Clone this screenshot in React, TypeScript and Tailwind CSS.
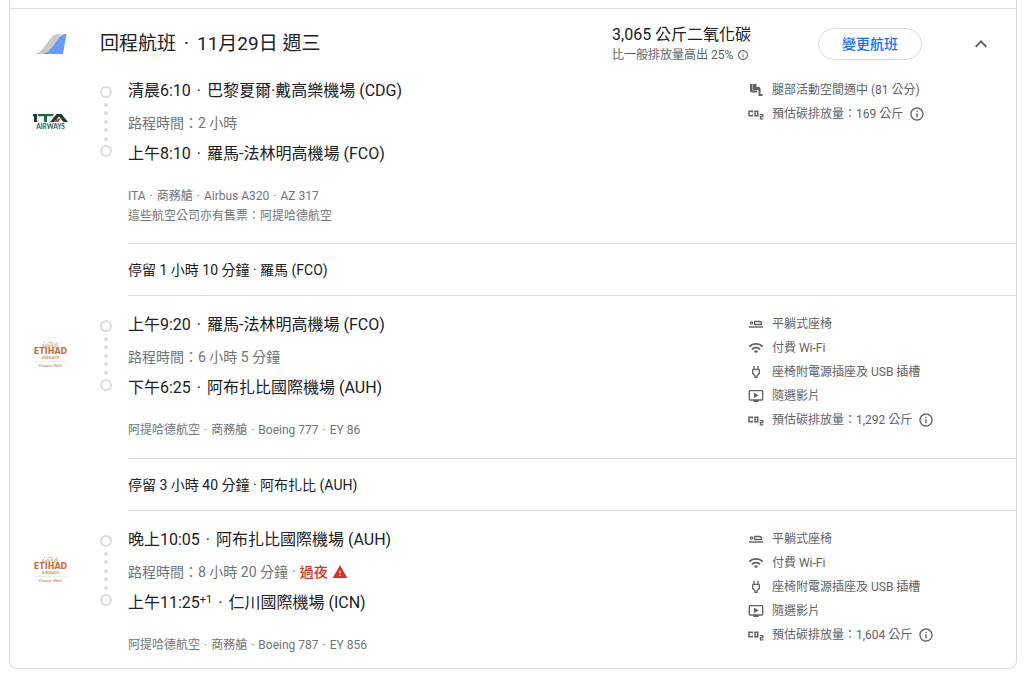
import { Fragment, type ReactNode } from 'react'
import {
  MdExpandLess,
  MdInfoOutline,
  MdOndemandVideo,
  MdOutlinePower,
  MdWarning,
  MdWifi,
} from 'react-icons/md'

type AmenityKind = 'legroom' | 'flat' | 'wifi' | 'power' | 'video' | 'co2'

interface Amenity {
  kind: AmenityKind
  label: string
}

interface Leg {
  airline: 'ita' | 'etihad'
  departTime: string
  departAirport: string
  duration: string
  overnight?: boolean
  arriveTime: string
  dayOffset?: string
  arriveAirport: string
  details: string[]
  note?: string
  amenities: Amenity[]
  layover?: string
}

const etihadAmenities = (co2: string): Amenity[] => [
  { kind: 'flat', label: '平躺式座椅' },
  { kind: 'wifi', label: '付費 Wi-Fi' },
  { kind: 'power', label: '座椅附電源插座及 USB 插槽' },
  { kind: 'video', label: '隨選影片' },
  { kind: 'co2', label: `預估碳排放量：${co2} 公斤` },
]

const legs: Leg[] = [
  {
    airline: 'ita',
    departTime: '清晨6:10',
    departAirport: '巴黎夏爾·戴高樂機場 (CDG)',
    duration: '2 小時',
    arriveTime: '上午8:10',
    arriveAirport: '羅馬-法林明高機場 (FCO)',
    details: ['ITA', '商務艙', 'Airbus A320', 'AZ 317'],
    note: '這些航空公司亦有售票：阿提哈德航空',
    amenities: [
      { kind: 'legroom', label: '腿部活動空間適中 (81 公分)' },
      { kind: 'co2', label: '預估碳排放量：169 公斤' },
    ],
    layover: '停留 1 小時 10 分鐘 · 羅馬 (FCO)',
  },
  {
    airline: 'etihad',
    departTime: '上午9:20',
    departAirport: '羅馬-法林明高機場 (FCO)',
    duration: '6 小時 5 分鐘',
    arriveTime: '下午6:25',
    arriveAirport: '阿布扎比國際機場 (AUH)',
    details: ['阿提哈德航空', '商務艙', 'Boeing 777', 'EY 86'],
    amenities: etihadAmenities('1,292'),
    layover: '停留 3 小時 40 分鐘 · 阿布扎比 (AUH)',
  },
  {
    airline: 'etihad',
    departTime: '晚上10:05',
    departAirport: '阿布扎比國際機場 (AUH)',
    duration: '8 小時 20 分鐘',
    overnight: true,
    arriveTime: '上午11:25',
    dayOffset: '+1',
    arriveAirport: '仁川國際機場 (ICN)',
    details: ['阿提哈德航空', '商務艙', 'Boeing 787', 'EY 856'],
    amenities: etihadAmenities('1,604'),
  },
]

function TailLogo() {
  return (
    <svg viewBox="0 0 34 22" className="h-[22px] w-[34px]" aria-hidden="true">
      <path d="M1 21C5 20.500 7 19 9.500 16L18 5C20.500 1.800 22 1 25 1H28L22 21Z" fill="#c8cacc" />
      <path d="M10 21C14 20 16 18 18.500 15L26 5C28.500 1.800 30 1 33.500 1L30 21Z" fill="#669df6" />
    </svg>
  )
}

function ItaLogo() {
  return (
    <svg viewBox="0 0 35 16" className="h-4 w-[35px]" aria-label="ITA Airways">
      <path d="M0 0H4V8H1V2.200H0Z" fill="#1f3b34" />
      <path d="M5 0H21L19.500 2.200H14V8H11V2.200H5Z" fill="#23674c" />
      <path d="M17 8L23.500 0H28.500L35 8H30.500L26 2.400L21 8Z" fill="#1f3b34" />
      <path d="M21 8L24 4.500H27.500L25.500 8Z" fill="#e0442f" />
      <text
        x="17.500"
        y="15"
        textAnchor="middle"
        fontSize="6.500"
        fontWeight="700"
        fontFamily="Lato, sans-serif"
        fill="#2d5a4b"
      >
        AIRWAYS
      </text>
    </svg>
  )
}

function EtihadLogo() {
  return (
    <svg viewBox="0 0 35 28" className="h-7 w-[35px]" aria-label="Etihad Airways">
      <path
        d="M10 2V5H13V2.500M15 1.500V5H17V2.500M19 0.500V5H22V1.500M24 0.500V4.500M11 0.500H12M16 0.500H18"
        fill="none"
        stroke="#cf9a72"
        strokeWidth="0.900"
      />
      <g textAnchor="middle">
        <text
          x="17.500"
          y="12"
          fontSize="8"
          fontFamily="DejaVu Sans, sans-serif"
          fontWeight="700"
          fill="#c9703f"
        >
          ETIHAD
        </text>
        <text x="17.500" y="17" fontSize="4" fontFamily="Lato, sans-serif" fontWeight="700" fill="#d0905f">
          AIRWAYS
        </text>
        <text x="17.500" y="25" fontSize="4.500" fontFamily="Lato, sans-serif" fontStyle="italic" fill="#c06a38">
          Choose Well.
        </text>
      </g>
      <path d="M1 19.500H34" stroke="#e3ddd8" strokeWidth="0.600" />
    </svg>
  )
}

const amenityIcons: Record<AmenityKind, ReactNode> = {
  legroom: (
    <svg viewBox="0 0 16 16" className="size-4" fill="#5f6368" aria-hidden="true">
      <path d="M2 2H4.500V8.500H9V10.500H4Q2 10.500 2 8.500Z" />
      <path d="M5 2H8.500V5H11Q12.500 5 12.500 6.500V12H14.500V14H10.500V8H5Z" />
    </svg>
  ),
  flat: (
    <svg viewBox="0 0 16 16" className="size-4" fill="none" stroke="#5f6368" aria-hidden="true">
      <circle cx="3.500" cy="7" r="1.200" strokeWidth="1.200" />
      <path d="M6.500 8.500V5.500H11.500Q13.500 5.500 13.500 7.500V8.500Z" strokeWidth="1.300" />
      <path d="M1 11H15" strokeWidth="1.400" />
    </svg>
  ),
  wifi: <MdWifi className="size-4" />,
  power: <MdOutlinePower className="size-4" />,
  video: <MdOndemandVideo className="size-4" />,
  co2: (
    <svg viewBox="0 0 16 16" className="size-4" fill="none" stroke="#5f6368" aria-hidden="true">
      <path d="M4.300 6.500V5.200H1V9.800H4.300V8.500" strokeWidth="1.500" />
      <path d="M7 5.200H9.800V9.800H7Z" strokeWidth="1.500" />
      <path d="M11.800 8.600H14.800V10.700H12.400V12.900H15.400" strokeWidth="1.200" />
    </svg>
  ),
}

function Timeline() {
  return (
    <div className="flex h-[71px] w-3 flex-col items-center justify-between" aria-hidden="true">
      <span className="size-3 rounded-full border-2 border-[#dadce0]" />
      {[0, 1, 2, 3, 4].map((dot) => (
        <span key={dot} className="size-1 rounded-full bg-[#dadce0]" />
      ))}
      <span className="size-3 rounded-full border-2 border-[#dadce0]" />
    </div>
  )
}

function LegSection({ leg, first, last }: { leg: Leg; first: boolean; last: boolean }) {
  return (
    <section className={`flex items-start ${first ? '' : 'pt-4'} ${last ? 'pb-3' : ''}`}>
      <div className="flex h-[87px] w-[118px] shrink-0 items-center justify-between pr-4 pl-[23px]">
        {leg.airline === 'ita' ? <ItaLogo /> : <EtihadLogo />}
        <Timeline />
      </div>

      <div className={`min-w-0 flex-1 pt-px ${first ? 'pb-[17px]' : last ? 'pb-px' : 'pb-[18px]'}`}>
        <p className="text-base leading-6 text-[#202124]">
          {leg.departTime}
          <span className="mx-1.5">·</span>
          {leg.departAirport}
        </p>
        <p className="flex h-[39px] items-center text-sm text-[#70757a]">
          路程時間：{leg.duration}
          {leg.overnight && (
            <>
              <span className="mx-1">·</span>
              <span className="font-medium text-[#d93025]">過夜</span>
              <MdWarning className="ml-1 size-4 text-[#d93025]" />
            </>
          )}
        </p>
        <p className="text-base leading-6 text-[#202124]">
          {leg.arriveTime}
          {leg.dayOffset && <sup className="text-[11px] leading-none">{leg.dayOffset}</sup>}
          <span className="mx-1.5">·</span>
          {leg.arriveAirport}
        </p>
        <div className="mt-5 text-xs leading-5 text-[#70757a]">
          <p>
            {leg.details.map((part, i) => (
              <Fragment key={part}>
                {i > 0 && <span className="mx-1">·</span>}
                {part}
              </Fragment>
            ))}
          </p>
          {leg.note && <p>{leg.note}</p>}
        </div>
      </div>

      <ul className="w-[268px] shrink-0 text-xs text-[#5f6368]">
        {leg.amenities.map((item) => (
          <li key={item.label} className="flex h-6 items-center gap-2">
            {amenityIcons[item.kind]}
            <span className="flex items-center gap-1.5">
              {item.label}
              {item.kind === 'co2' && (
                <button type="button" aria-label="碳排放量詳情">
                  <MdInfoOutline className="size-4" />
                </button>
              )}
            </span>
          </li>
        ))}
      </ul>
    </section>
  )
}

export default function App() {
  return (
    <main className="bg-white pr-[7px] pl-[9px] font-[Roboto,'Noto_Sans_CJK_TC',sans-serif]">
      <article className="rounded-b-lg border border-t-0 border-[#dadce0] pt-2">
        <header className="flex h-[70px] items-center border-t border-[#dadce0] pr-[15px] pl-[23px]">
          <TailLogo />
          <h2 className="ml-[33px] flex-1 pt-0.5 text-[19px] text-[#202124]">
            回程航班<span className="mx-2">·</span>11月29日 週三
          </h2>
          <div className="w-[206px] pb-0.5">
            <p className="text-base leading-6 text-[#202124]">3,065 公斤二氧化碳</p>
            <p className="flex items-center gap-1 text-xs text-[#5f6368]">
              比一般排放量高出 25%
              <button type="button" aria-label="排放量詳情">
                <MdInfoOutline className="size-3" />
              </button>
            </p>
          </div>
          <button
            type="button"
            className="h-8 w-[104px] rounded-full border border-[#dadce0] text-sm font-medium text-[#1a6ff0]"
          >
            變更航班
          </button>
          <button
            type="button"
            aria-label="收合"
            className="ml-[39px] flex size-10 items-center justify-center text-[#5f6368]"
          >
            <MdExpandLess className="size-6" />
          </button>
        </header>

        {legs.map((leg, i) => (
          <div key={leg.departTime}>
            <LegSection leg={leg} first={i === 0} last={i === legs.length - 1} />
            {leg.layover && (
              <div className="ml-[118px] flex h-[53px] items-center border-y border-[#dadce0] text-sm text-[#202124]">
                {leg.layover}
              </div>
            )}
          </div>
        ))}
      </article>
    </main>
  )
}
